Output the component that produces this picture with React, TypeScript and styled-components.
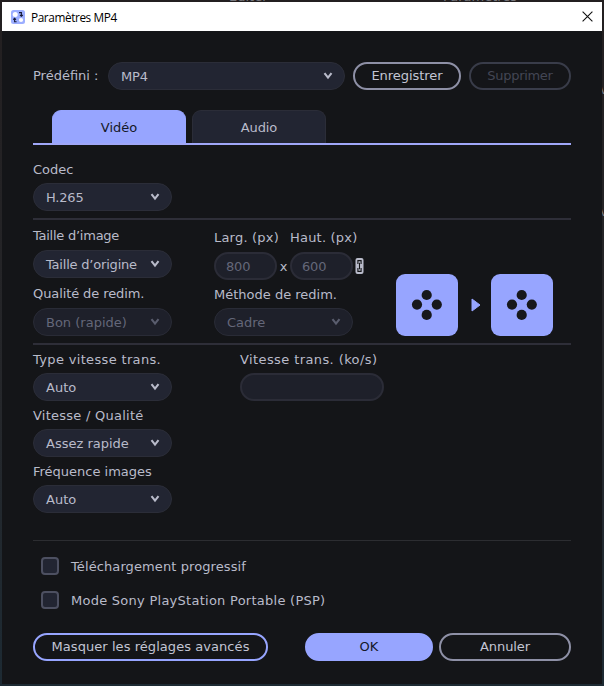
import React from 'react';
import styled, { createGlobalStyle } from 'styled-components';

const Global = createGlobalStyle`
  *{box-sizing:border-box}
  html,body{margin:0;padding:0;background:#202023;overflow:hidden}
  button,input{font:inherit;color:inherit;margin:0}
`;

const Desktop = styled.div`
  width:604px;height:686px;padding:2px;position:relative;overflow:hidden;
  background:linear-gradient(#231f20,#25272b 60%,#1d2a33);
  font:13px/16px "DejaVu Sans",Verdana,sans-serif;color:#b9bbca;
`;
const Behind = styled.span<{ $x: number; $y: number }>`
  position:absolute;left:${p => p.$x}px;top:${p => p.$y}px;color:#77777c;white-space:nowrap;
`;
const Dialog = styled.main`
  position:relative;width:600px;height:682px;background:#141518;display:flex;flex-direction:column;
`;
const TitleBar = styled.header`
  height:29px;flex:none;background:#fff;color:#000;display:flex;align-items:center;padding:0 9px;
`;
const Title = styled.h1`
  margin:0 auto 0 6px;font:400 11.8px/16px "Open Sans",sans-serif;letter-spacing:-0.4px;white-space:nowrap;
`;
const Content = styled.div`
  padding:31px 31px 0;display:flex;flex-direction:column;width:600px;
`;
const PresetRow = styled.div`
  display:grid;grid-template-columns:67px 237px 108px 102px;column-gap:8px;align-items:center;
`;
const Text = styled.span<{ $ls?: number; $pad?: number }>`
  white-space:nowrap;letter-spacing:${p => p.$ls ?? 0}px;padding-top:${p => p.$pad ?? 0}px;
`;
const SelectBox = styled.button<{ $off?: boolean }>`
  height:28px;width:100%;border-radius:14px;border:1px solid ${p => (p.$off ? '#292b36' : '#2b2d38')};
  background:${p => (p.$off ? '#1e202a' : '#222532')};color:${p => (p.$off ? '#646779' : '#b9bbca')};
  padding:0 11px 0 12px;display:flex;align-items:center;justify-content:space-between;
`;
const Field = styled.input`
  height:28px;width:100%;border-radius:14px;border:2px solid #2b2c37;background:#1e202a;
  color:#646779;padding:1px 10px 0;outline:none;letter-spacing:-0.2px;
`;
const Button = styled.button<{ $kind?: 'primary' | 'accent' | 'off' }>`
  height:28px;border-radius:14px;padding:0;white-space:nowrap;
  border:2px solid ${p => (p.$kind === 'off' ? '#393c49' : p.$kind ? '#97a5ff' : '#8e90a6')};
  background:${p => (p.$kind === 'primary' ? '#97a5ff' : 'transparent')};
  color:${p => (p.$kind === 'primary' ? '#141828' : p.$kind === 'off' ? '#434654' : '#c3c5d4')};
`;
const Tabs = styled.nav`
  display:flex;gap:6px;margin-top:20px;height:35px;padding-left:19px;border-bottom:2px solid #a0a7f8;
`;
const Tab = styled.button<{ $active?: boolean }>`
  width:134px;height:33px;border-radius:9px 9px 0 0;padding:2px 0 0;
  border:1px solid ${p => (p.$active ? '#97a5ff' : '#2b2d38')};border-bottom:0;
  background:${p => (p.$active ? '#97a5ff' : '#222532')};color:${p => (p.$active ? '#141828' : '#b9bbca')};
`;
const Group = styled.div<{ $gap: number; $label: number; $w?: number }>`
  display:grid;width:${p => p.$w ?? 139}px;grid-template-rows:${p => p.$label}px 28px;margin-top:${p => p.$gap}px;
`;
const Rule = styled.hr<{ $top: number; $thin?: boolean }>`
  border:0;width:538px;height:${p => (p.$thin ? 1 : 2)}px;margin:${p => p.$top}px 0 0;
  background:${p => (p.$thin ? '#2c2d31' : '#2e2e38')};
`;
const Columns = styled.div<{ $cols: string }>`
  display:grid;grid-template-columns:${p => p.$cols};align-items:start;
`;
const SizeRow = styled.div`
  display:grid;grid-template-columns:63px 13px 63px 16px;height:28px;align-items:center;
`;
const SizeLabels = styled.div`
  display:grid;grid-template-columns:76px 76px;height:22px;margin-top:10px;
`;
const Times = styled.span`text-align:center;padding-top:2px;`;
const Preview = styled.div`
  display:grid;grid-template-columns:62px 33px 62px;align-items:center;margin-top:54px;
`;
const Arrow = styled.svg`margin-left:13px;`;
const Tile = styled.div`
  width:62px;height:62px;border-radius:9px;background:#97a5ff;display:grid;place-items:center;
`;
const CheckRow = styled.label`
  display:flex;align-items:center;gap:12px;height:18px;margin:16px 0 0 8px;
`;
const Check = styled.input.attrs({ type: 'checkbox' })`
  appearance:none;width:18px;height:18px;margin:0;border:2px solid #4d5061;border-radius:4px;background:#222532;
`;
const Footer = styled.footer`
  display:grid;grid-template-columns:235px 128px 132px;margin-top:24px;
  column-gap:6px;
  & > :first-child{margin-right:0}
  grid-template-columns:266px 128px 132px;
`;
const AdvancedButton = styled(Button)`width:235px;`;

const Chevron = ({ off }: { off?: boolean }) => (
  <svg width="10" height="8" viewBox="0 0 10 8" fill="none" stroke={off ? '#5a5d6e' : '#b9bbca'} strokeWidth="2.1">
    <path d="M1.5 1.2 5 5.6 8.5 1.2" />
  </svg>
);
const Select = ({ value, off, ls }: { value: string; off?: boolean; ls?: number }) => (
  <SelectBox $off={off}>
    <Text $ls={ls} $pad={2}>{value}</Text>
    <Chevron off={off} />
  </SelectBox>
);
const Dots = () => (
  <Tile>
    <svg width="32" height="32" viewBox="0 0 32 32" fill="#17181c">
      <circle cx="15.7" cy="6" r="5.1" /><circle cx="6" cy="15.6" r="5.1" />
      <circle cx="25.8" cy="15.6" r="5.1" /><circle cx="15.7" cy="25.9" r="5.1" />
    </svg>
  </Tile>
);

export default function App() {
  return (
    <Desktop>
      <Global />
      <Behind $x={229} $y={-11}>Editer</Behind>
      <Behind $x={443} $y={-11}>Paramètres</Behind>
      <Behind $x={600} $y={82}>v</Behind>
      <Behind $x={600} $y={204}>v</Behind>
      <Dialog>
        <TitleBar>
          <svg width="14" height="14" viewBox="0 0 14 14">
            <rect width="14" height="14" rx="2.5" fill="#9caeff" />
            <circle cx="4.2" cy="4.4" r="2.5" fill="#fff" />
            <circle cx="10" cy="10" r="2.1" fill="#fff" />
            <path d="M8 2.6h2.4v3M9 5l1.4 1.3L11.8 5M5.6 11.8H3.6v-3M2.2 9.6l1.4-1.3L5 9.6" fill="none" stroke="#171b38" strokeWidth="1.1" />
          </svg>
          <Title>Paramètres MP4</Title>
          <svg width="11" height="11" viewBox="0 0 11 11" stroke="#111" strokeWidth="1.1"><path d="M.6.6 10.4 10.4M10.4.6.6 10.4" /></svg>
        </TitleBar>
        <Content>
          <PresetRow>
            <Text>Prédéfini :</Text>
            <Select value="MP4" ls={-0.2} />
            <Button><Text $ls={-0.05}>Enregistrer</Text></Button>
            <Button $kind="off"><Text $ls={-0.3}>Supprimer</Text></Button>
          </PresetRow>
          <Tabs>
            <Tab $active>Vidéo</Tab>
            <Tab><Text $ls={-0.1}>Audio</Text></Tab>
          </Tabs>
          <Group $gap={17} $label={21}><Text>Codec</Text><Select value="H.265" ls={-0.2} /></Group>
          <Rule $top={7} />
          <Columns $cols="181px 182px 157px">
            <div>
              <Group $gap={8} $label={22}><Text $ls={-0.25}>Taille d’image</Text><Select value="Taille d’origine" ls={-0.2} /></Group>
              <Group $gap={8} $label={22}><Text $ls={-0.1}>Qualité de redim.</Text><Select off value="Bon (rapide)" /></Group>
            </div>
            <div>
              <SizeLabels><Text $ls={0.2}>Larg. (px)</Text><Text $ls={0.2}>Haut. (px)</Text></SizeLabels>
              <SizeRow>
                <Field defaultValue="800" /><Times>x</Times><Field defaultValue="600" />
                <svg width="12" height="16" viewBox="0 0 12 16" fill="none">
                  <rect x="2.5" y="0" width="8" height="16" rx="2" fill="#b9bbca" />
                  <path d="M4.9 6V2.6H8.1V6M4.9 10v3.4H8.1V10M6.5 4.8v6.4" stroke="#141518" strokeWidth="1.1" />
                </svg>
              </SizeRow>
              <Group $gap={7} $label={21}><Text>Méthode de redim.</Text><Select off value="Cadre" /></Group>
            </div>
            <Preview>
              <Dots />
              <Arrow width="10" height="14" viewBox="0 0 10 14"><path d="M1 1 9 7 1 13Z" fill="#97a5ff" stroke="#97a5ff" strokeLinejoin="round" /></Arrow>
              <Dots />
            </Preview>
          </Columns>
          <Rule $top={7} />
          <Columns $cols="207px 144px">
            <div>
              <Group $gap={7} $label={21}><Text $ls={0.34}>Type vitesse trans.</Text><Select value="Auto" /></Group>
              <Group $gap={7} $label={21}><Text $ls={0.25}>Vitesse / Qualité</Text><Select value="Assez rapide" /></Group>
              <Group $gap={7} $label={21}><Text>Fréquence images</Text><Select value="Auto" /></Group>
            </div>
            <Group $gap={7} $label={21} $w={144}><Text $ls={0.4}>Vitesse trans. (ko/s)</Text><Field /></Group>
          </Columns>
          <Rule $thin $top={27} />
          <CheckRow><Check /><Text $ls={0.1} $pad={2}>Téléchargement progressif</Text></CheckRow>
          <CheckRow><Check /><Text $ls={0.26} $pad={2}>Mode Sony PlayStation Portable (PSP)</Text></CheckRow>
          <Footer>
            <AdvancedButton $kind="accent"><Text $ls={0.06}>Masquer les réglages avancés</Text></AdvancedButton>
            <Button $kind="primary">OK</Button>
            <Button><Text $ls={-0.1}>Annuler</Text></Button>
          </Footer>
        </Content>
      </Dialog>
    </Desktop>
  );
}
